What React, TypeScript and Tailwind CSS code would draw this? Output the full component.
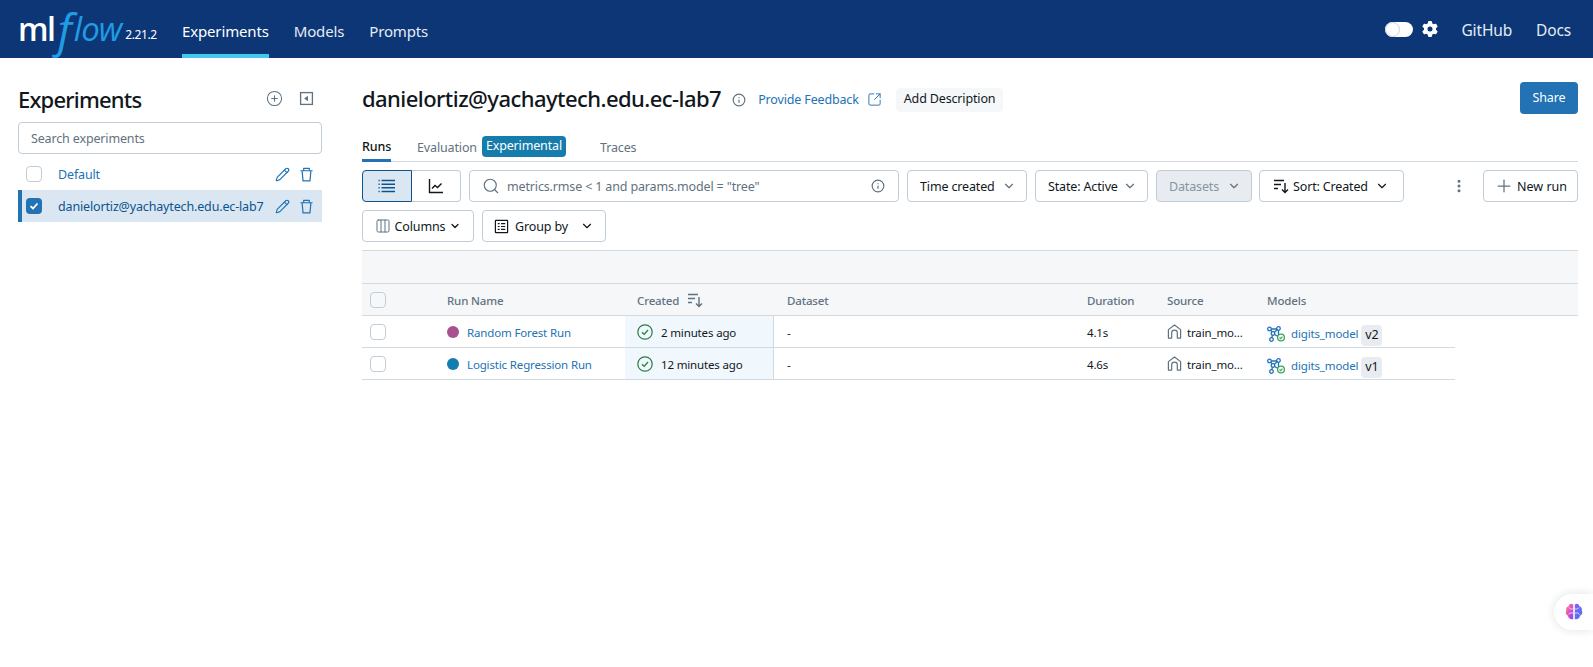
import {
  ChevronDown,
  CirclePlus,
  Columns3,
  EllipsisVertical,
  Info,
  Pencil,
  Plus,
  Search,
  SquareArrowOutUpRight,
} from 'lucide-react';
import { FaGear } from 'react-icons/fa6';

const runs = [
  { name: 'Random Forest Run', color: 'bg-[#a9508f]', created: '2 minutes ago', duration: '4.1s', version: 'v2' },
  { name: 'Logistic Regression Run', color: 'bg-[#137dae]', created: '12 minutes ago', duration: '4.6s', version: 'v1' },
];

const gridCols = 'grid grid-cols-[85px_178px_149px_313px_80px_100px_188px]';

function SortIcon({ className }: { className?: string }) {
  return (
    <svg viewBox="0 0 16 16" fill="none" stroke="currentColor" strokeWidth="1.4" className={className}>
      <path d="M1 2.500h10M1 6.500h7M1 10.500h4M12 5v9.500M9 11.500l3 3 3-3" />
    </svg>
  );
}

function ChartIcon({ className }: { className?: string }) {
  return (
    <svg viewBox="0 0 16 16" fill="none" stroke="currentColor" strokeWidth="1.4" className={className}>
      <path d="M1.500 1v13.500H15M4 10.500l3-3 2.500 2 4-4" />
    </svg>
  );
}

function ListIcon({ className }: { className?: string }) {
  return (
    <svg viewBox="0 0 18 16" fill="none" stroke="currentColor" strokeWidth="1.500" className={className}>
      <path d="M3.500 2.500H17M3.500 6.200H17M3.500 9.800H17M3.500 13.500H17" />
      <path d="M.5 2.500h1.200M.5 6.200h1.200M.5 9.800h1.200M.5 13.500h1.200" />
    </svg>
  );
}

function GroupIcon({ className }: { className?: string }) {
  return (
    <svg viewBox="0 0 16 16" fill="none" stroke="currentColor" strokeWidth="1.300" className={className}>
      <rect x="1.500" y="1.500" width="13" height="13" rx="0.500" />
      <path d="M4 5h2M4 8h2M4 11h2M7.500 5H12M7.500 8H12M7.500 11H12" />
    </svg>
  );
}

function CollapseIcon({ className }: { className?: string }) {
  return (
    <svg viewBox="0 0 16 16" className={className}>
      <rect x="1.700" y="1.700" width="12.600" height="12.600" fill="none" stroke="currentColor" strokeWidth="1.400" />
      <path d="M9.500 5v6L5.500 8z" fill="currentColor" />
    </svg>
  );
}

function TrashIcon({ className }: { className?: string }) {
  return (
    <svg viewBox="0 0 16 16" fill="none" stroke="currentColor" strokeWidth="1.300" strokeLinejoin="round" className={className}>
      <path d="M1.500 4h13M5 4V1.500h6V4M3.300 4l1 10.800h7.400l1-10.800" />
    </svg>
  );
}

function SourceIcon({ className }: { className?: string }) {
  return (
    <svg viewBox="0 0 16 16" fill="none" stroke="currentColor" strokeWidth="1.300" className={className}>
      <path d="M1.500 15V6L8 1l6.500 5v9h-3.500V9.500A3 3 0 0 0 5 9.500V15z" strokeLinejoin="round" />
    </svg>
  );
}

function ModelIcon({ className }: { className?: string }) {
  return (
    <svg viewBox="0 0 18 16" fill="none" className={className}>
      <g stroke="#2272b4" strokeWidth="1.300">
        <path d="M3 3h8M3 3l3 4.500M11 3 6 7.500M6 7.500l-1.500 5M6 7.500l5 3M11.500 3v7" />
        <circle cx="2.500" cy="3" r="1.800" fill="#fff" />
        <circle cx="11.500" cy="2.500" r="1.800" fill="#fff" />
        <circle cx="6" cy="7.500" r="1.800" fill="#fff" />
        <circle cx="4.500" cy="13.500" r="1.800" fill="#fff" />
      </g>
      <circle cx="14" cy="11.500" r="3.400" fill="#fff" stroke="#3ba55d" strokeWidth="1.300" />
      <path d="M12.500 11.500l1.100 1.100 1.900-2" stroke="#3ba55d" strokeWidth="1.100" />
    </svg>
  );
}

function CheckCircle({ className }: { className?: string }) {
  return (
    <svg viewBox="0 0 16 16" fill="none" stroke="#277c43" strokeWidth="1.200" className={className}>
      <circle cx="8" cy="8" r="7.200" />
      <path d="M5 8.200l2.200 2.200L11 6" strokeWidth="1.300" />
    </svg>
  );
}

function BrainIcon({ className }: { className?: string }) {
  return (
    <svg viewBox="0 0 20 20" className={className}>
      <defs>
        <linearGradient id="brainLeft" x1="0" y1="0" x2="1" y2="1">
          <stop offset="0" stopColor="#ff9a3d" />
          <stop offset="0.500" stopColor="#e04fd0" />
          <stop offset="1" stopColor="#7a4df0" />
        </linearGradient>
        <linearGradient id="brainRight" x1="0" y1="0" x2="1" y2="1">
          <stop offset="0" stopColor="#8a5cf5" />
          <stop offset="1" stopColor="#3f7cf0" />
        </linearGradient>
      </defs>
      <path d="M9.200 2.500C7.500 1 5 2 4.800 4 2.800 4.500 1.500 6.500 2.300 8.500 1 10.500 1.800 13 4 13.700c.2 2.300 2.200 4 5.200 3.500z" fill="url(#brainLeft)" />
      <path d="M10.800 2.500C12.500 1 15 2 15.200 4c2 .5 3.300 2.500 2.500 4.500 1.300 2 .5 4.500-1.700 5.200-.2 2.300-2.200 4-5.200 3.500z" fill="url(#brainRight)" />
      <path d="M9 7H6.500L5 5.500M9 11H6l-1.500 1.500M11 7h2.500L15 5.500M11 11h3l1.500 1.500" fill="none" stroke="#fff" strokeWidth="0.700" />
    </svg>
  );
}

function SelectButton({ label, className, muted }: { label: string; className: string; muted?: boolean }) {
  return (
    <button
      className={`h-8 flex items-center justify-between whitespace-nowrap pl-[12px] pr-[10px] rounded border border-[#c0cdd8] ${
        muted ? 'bg-[#e8ecf0] text-[#8396a5]' : 'bg-white text-[#11171c]'
      } ${className}`}
    >
      <span className="pt-[2px]">{label}</span>
      <ChevronDown className="w-[14px] h-[14px] text-[#5f7281]" />
    </button>
  );
}

function Header() {
  return (
    <header className="h-[58px] bg-[#0c3676] flex items-center text-white">
      <div className="w-[182px] pl-[18px] flex items-center shrink-0">
        <span className="font-['Open_Sans',sans-serif] text-[32px] leading-[58px] font-semibold tracking-[-1.500px]">ml</span>
        <span className="font-['Open_Sans',sans-serif] italic text-[#1f9ce4] text-[33px] leading-[58px] font-medium tracking-[-1px] flex items-center">
          <span className="text-[46px] leading-[58px] font-normal tracking-normal pl-[3px] pr-[2px]">f</span>
          <span>low</span>
        </span>
        <span className="text-xs ml-[4px] mt-[12px] tracking-[-0.4px]">2.21.2</span>
      </div>
      <nav className="flex h-full gap-[25px] text-[15px]">
        <div className="h-full flex items-center border-b-4 border-[#43c9ed] pt-[9px]">Experiments</div>
        <div className="h-full flex items-center pt-[5px] text-[#e4ecf3]">Models</div>
        <div className="h-full flex items-center pt-[5px] text-[#e4ecf3]">Prompts</div>
      </nav>
      <div className="ml-auto flex items-center pr-[22px] text-[15.5px] text-[#e4ecf3]">
        <div className="w-[28px] h-[15px] rounded-full bg-white flex items-center">
          <div className="w-[15px] h-[15px] rounded-full border border-[#c8d2dc] bg-white" />
        </div>
        <FaGear className="w-4 h-4 text-white ml-[9px]" />
        <span className="ml-[23px] pt-1">GitHub</span>
        <span className="ml-[24px] pt-1">Docs</span>
      </div>
    </header>
  );
}

function Sidebar() {
  return (
    <aside className="w-[340px] shrink-0 pl-[18px] pr-[18px] pt-[24px]">
      <div className="h-8 flex items-center justify-between pr-[8px]">
        <h2 className="mt-[2px] text-[22px] tracking-[-0.8px] font-medium text-[#11171c]">Experiments</h2>
        <div className="flex items-center gap-[16px] text-[#5f7281]">
          <CirclePlus className="w-[17px] h-[17px]" strokeWidth={1.5} />
          <CollapseIcon className="w-[15px] h-[15px]" />
        </div>
      </div>
      <input
        className="mt-2 w-full h-8 rounded border border-[#c0cdd8] px-3 placeholder:text-[#5f7281]"
        placeholder="Search experiments"
      />
      <div className="mt-1 h-[32px] flex items-center pl-2 pr-[8px]">
        <span className="w-4 h-4 rounded border border-[#c0cdd8] shrink-0" />
        <span className="ml-[16px] pt-[2px] text-[#2272b4]">Default</span>
        <Pencil className="ml-auto w-[15px] h-[15px] text-[#2272b4]" strokeWidth={1.8} />
        <TrashIcon className="ml-[9px] w-[15px] h-[15px] text-[#2272b4]" />
      </div>
      <div className="h-[32px] flex items-center bg-[#dae7f3] border-l-4 border-[#2272b4] pl-1 pr-[8px]">
        <span className="w-4 h-4 rounded bg-[#2272b4] shrink-0 flex items-center justify-center">
          <svg viewBox="0 0 12 12" className="w-3 h-3" fill="none" stroke="#fff" strokeWidth="1.800">
            <path d="M2.500 6.200 5 8.500l4.500-5" />
          </svg>
        </span>
        <span className="ml-[16px] pt-[2px] text-[#0e538b] whitespace-nowrap">danielortiz@yachaytech.edu.ec-lab7</span>
        <Pencil className="ml-auto w-[15px] h-[15px] text-[#2272b4]" strokeWidth={1.8} />
        <TrashIcon className="ml-[9px] w-[15px] h-[15px] text-[#2272b4]" />
      </div>
    </aside>
  );
}

function TitleRow() {
  return (
    <div className="h-8 flex items-center">
      <h1 className="mt-[1px] text-[22px] tracking-[-0.55px] font-medium text-[#11171c] whitespace-nowrap">danielortiz@yachaytech.edu.ec-lab7</h1>
      <Info className="mt-[3px] ml-[11px] w-[14px] h-[14px] text-[#5f7281]" />
      <span className="ml-[12px] mt-[4px] text-[#2272b4]">Provide Feedback</span>
      <SquareArrowOutUpRight className="ml-[8px] mt-[3px] w-[15px] h-[15px] text-[#2272b4]" strokeWidth={1.5} />
      <button className="ml-[14px] mt-[3px] h-[24px] px-[8px] rounded bg-[#f6f7f9] text-[#11171c]">Add Description</button>
      <button className="ml-auto h-8 w-[58px] rounded bg-[#2272b4] text-white">Share</button>
    </div>
  );
}

function Tabs() {
  return (
    <div className="mt-[22px] h-[26px] flex items-stretch border-b border-[#d1d9e1] text-[#5f7281]">
      <div className="border-b-[3px] border-[#2272b4] -mb-px text-[#11171c] font-medium flex items-center">Runs</div>
      <div className="ml-[26px] flex items-center">Evaluation</div>
      <span className="ml-[5px] self-start h-[21px] px-[4px] rounded bg-[#157cab] text-white flex items-center">Experimental</span>
      <div className="ml-[34px] flex items-center">Traces</div>
    </div>
  );
}

function Toolbar() {
  return (
    <>
      <div className="mt-2 flex items-center">
        <div className="h-8 w-[50px] flex items-center justify-center bg-[#dae7f3] border border-[#0e538b] rounded-l text-[#0e538b]">
          <ListIcon className="w-[18px] h-4" />
        </div>
        <div className="h-8 w-[49px] flex items-center justify-center border border-l-0 border-[#c0cdd8] rounded-r text-[#11171c]">
          <ChartIcon className="w-4 h-4" />
        </div>
        <div className="ml-2 h-8 w-[430px] flex items-center rounded border border-[#c0cdd8] pl-[12px] pr-[13px] text-[#5f7281]">
          <Search className="w-[18px] h-[18px] mr-[7px]" strokeWidth={1.5} />
          <span className="pt-[2px]">metrics.rmse &lt; 1 and params.model = "tree"</span>
          <Info className="ml-auto w-[14px] h-[14px]" />
        </div>
        <SelectButton label="Time created" className="ml-2 w-[120px]" />
        <SelectButton label="State: Active" className="ml-2 w-[113px]" />
        <SelectButton label="Datasets" muted className="ml-2 w-[96px]" />
        <button className="ml-[7px] h-8 w-[145px] flex items-center rounded border border-[#c0cdd8] pl-[13px] pr-[14px] text-[#11171c] whitespace-nowrap">
          <SortIcon className="w-4 h-4 mr-[4px]" />
          <span className="pt-[2px]">Sort: Created</span>
          <ChevronDown className="ml-auto w-[14px] h-[14px]" />
        </button>
        <EllipsisVertical className="ml-[47px] w-4 h-4 text-[#5f7281]" strokeWidth={2.5} />
        <button className="ml-auto h-8 w-[95px] flex items-center justify-center gap-[3px] rounded border border-[#c0cdd8] text-[#11171c]">
          <Plus className="w-[20px] h-[20px] text-[#5f7281]" strokeWidth={1.5} />
          <span className="pt-[2px] tracking-normal">New run</span>
        </button>
      </div>
      <div className="mt-2 flex items-center gap-2">
        <button className="h-8 w-[112px] flex items-center justify-center gap-[4px] rounded border border-[#c0cdd8] text-[#11171c]">
          <Columns3 className="w-4 h-4 text-[#5f7281]" strokeWidth={1.5} />
          <span className="pt-[2px]">Columns</span>
          <ChevronDown className="w-3 h-3" strokeWidth={2.5} />
        </button>
        <button className="h-8 w-[124px] flex items-center justify-center gap-[6px] rounded border border-[#c0cdd8] text-[#11171c]">
          <GroupIcon className="w-[15px] h-[15px]" />
          <span className="pt-[2px]">Group by</span>
          <ChevronDown className="ml-[6px] w-[14px] h-[14px]" />
        </button>
      </div>
    </>
  );
}

function RunsTable() {
  return (
    <div className="mt-2">
      <div className="h-[33px] bg-[#f6f7f9] border-t border-[#d1d9e1]" />
      <div className={`${gridCols} h-[33px] items-center bg-[#f6f7f9] border-y border-[#d1d9e1] text-[11.5px] font-medium text-[#5f7281]`}>
        <div className="pl-2">
          <span className="block w-4 h-4 rounded border border-[#c0cdd8]" />
        </div>
        <div className="pt-[2px]">Run Name</div>
        <div className="pl-3 flex items-center gap-2">
          <span className="pt-[2px]">Created</span>
          <SortIcon className="w-4 h-4" />
        </div>
        <div className="pl-[13px] pt-[2px]">Dataset</div>
        <div className="pt-[2px]">Duration</div>
        <div className="pt-[2px]">Source</div>
        <div className="pt-[2px]">Models</div>
      </div>
      {runs.map((run) => (
        <div key={run.name} className={`${gridCols} h-[32px] w-[1093px] items-center border-b border-[#d1d9e1] text-[11.5px] text-[#11171c]`}>
          <div className="pl-2">
            <span className="block w-4 h-4 rounded border border-[#c0cdd8]" />
          </div>
          <div className="flex items-center gap-2 text-[#2272b4] whitespace-nowrap">
            <span className={`w-3 h-3 rounded-full ${run.color}`} />
            <span className="pt-[2px]">{run.name}</span>
          </div>
          <div className="h-full pl-3 flex items-center gap-2 bg-[#f0f7fd] border-r border-[#d1d9e1]">
            <CheckCircle className="w-4 h-4" />
            <span className="pt-[2px]">{run.created}</span>
          </div>
          <div className="pl-[13px] pt-[2px]">-</div>
          <div className="pt-[2px]">{run.duration}</div>
          <div className="flex items-center gap-[5px]">
            <SourceIcon className="w-[15px] h-[15px] text-[#5f7281]" />
            <span className="pt-[2px]">train_mo...</span>
          </div>
          <div className="flex items-center gap-[6px]">
            <ModelIcon className="w-[18px] h-4 mt-[5px]" />
            <span className="pt-[4px] text-[#2272b4]">digits_model</span>
            <span className="ml-[-3px] mt-[8px] px-[4px] h-[21px] rounded bg-[#e8ecf0] text-[12.5px] flex items-center">{run.version}</span>
          </div>
        </div>
      ))}
    </div>
  );
}

export default function App() {
  return (
    <div className="min-h-[667px] bg-white text-[12.5px] tracking-[-0.15px] font-['Noto_Sans',sans-serif] relative overflow-hidden">
      <Header />
      <div className="flex">
        <Sidebar />
        <main className="flex-1 min-w-0 pl-[22px] pr-[15px] pt-[24px]">
          <TitleRow />
          <Tabs />
          <Toolbar />
          <RunsTable />
        </main>
      </div>
      <div className="absolute right-0 top-[594px] w-[39px] h-[36px] rounded-l-full bg-white shadow-[0_0_10px_rgba(0,0,0,0.12)] flex items-center pl-[10px]">
        <BrainIcon className="w-5 h-5" />
      </div>
    </div>
  );
}
